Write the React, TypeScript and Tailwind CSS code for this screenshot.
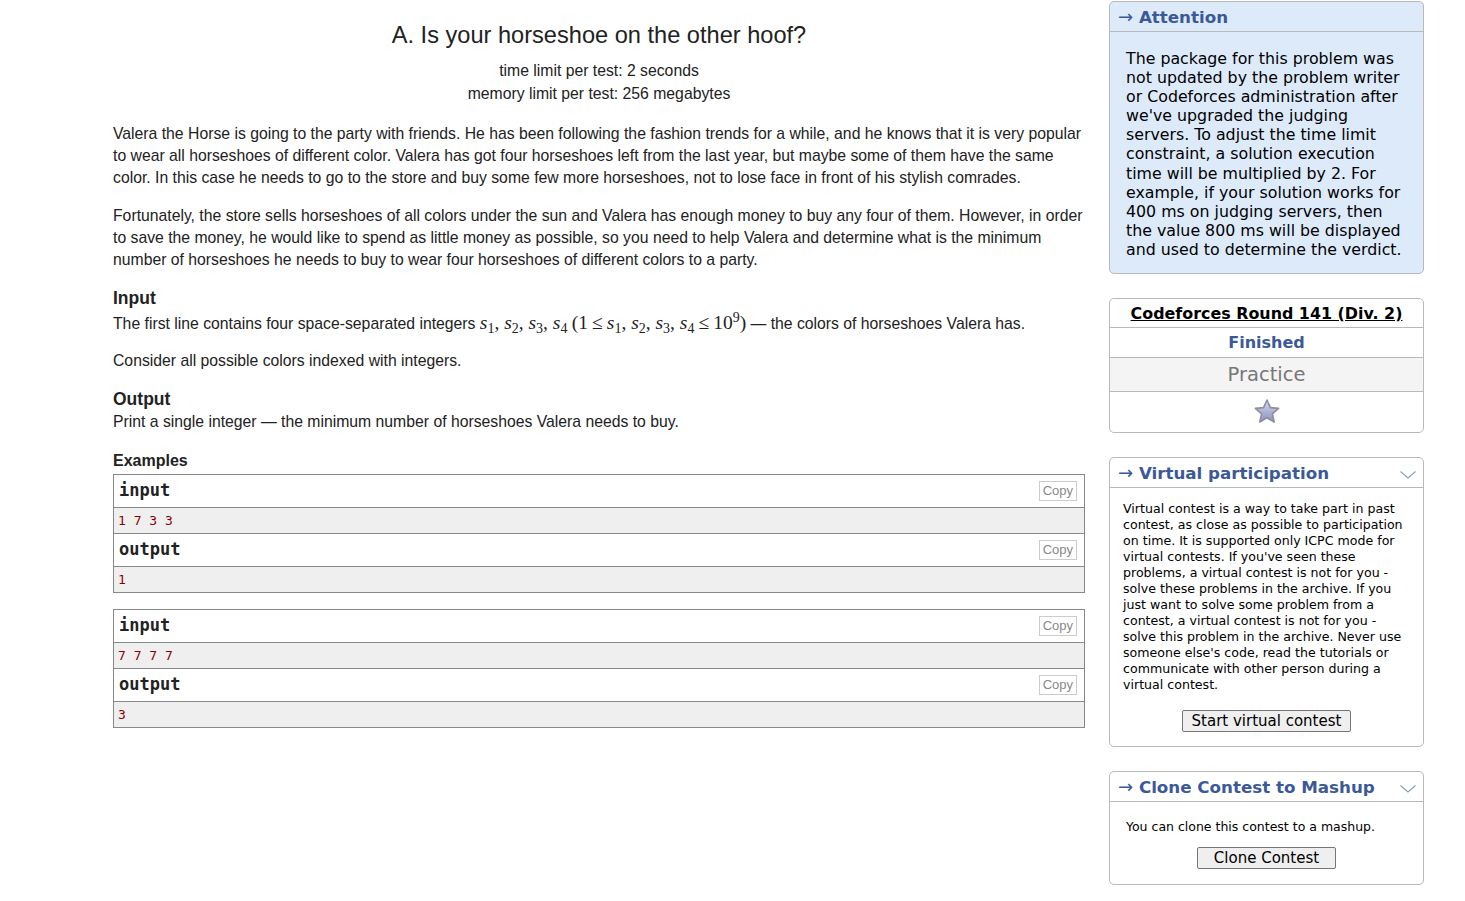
import React from 'react';

const sans = "font-['Liberation_Sans',Arial,sans-serif]";
const verdana = "font-['DejaVu_Sans',Verdana,sans-serif]";
const mono = "font-['DejaVu_Sans_Mono',Consolas,monospace]";
const serif = "font-['Liberation_Serif','Times_New_Roman',serif]";

const examples = [
  { input: '1 7 3 3', output: '1' },
  { input: '7 7 7 7', output: '3' },
];

function CopyButton() {
  return (
    <span className={`mr-[7px] border border-[#ccc] px-[3px] text-[13px] leading-[18px] text-[#888] ${sans}`}>
      Copy
    </span>
  );
}

function SampleBox({ input, output }: { input: string; output: string }) {
  const rows = [
    { label: 'input', value: input },
    { label: 'output', value: output },
  ];
  return (
    <div className="border border-[#888]">
      {rows.map((r, i) => (
        <div key={r.label} className={i > 0 ? 'border-t border-[#888]' : ''}>
          <div className="flex h-[33px] items-center justify-between bg-white border-b border-[#888]">
            <span className={`pl-[5px] text-[17px] font-bold text-[#222] ${mono}`}>{r.label}</span>
            <CopyButton />
          </div>
          <div className={`h-[25px] bg-[#efefef] pl-[4px] text-[13px] leading-[25px] text-[#8b0000] ${mono}`}>{r.value}</div>
        </div>
      ))}
    </div>
  );
}

function Chevron() {
  return (
    <svg width="18" height="10" viewBox="0 0 18 10" className="mr-[6px] mt-[4px]">
      <polyline points="1.5,1.5 9,8 16.5,1.5" fill="none" stroke="#8aa0c0" strokeWidth="1.2" />
    </svg>
  );
}

function Star() {
  return (
    <svg width="30" height="30" viewBox="0 0 30 30">
      <defs>
        <linearGradient id="starFill" x1="0" y1="0" x2="0" y2="1">
          <stop offset="0" stopColor="#d6d8ee" />
          <stop offset="1" stopColor="#8a90c6" />
        </linearGradient>
      </defs>
      <path
        d="M15 3 L18.4 10.6 L26.6 11.4 L20.4 16.9 L22.2 25 L15 20.8 L7.8 25 L9.6 16.9 L3.4 11.4 L11.6 10.6 Z"
        fill="url(#starFill)"
        stroke="#8e8e9c"
        strokeWidth="1.6"
        strokeLinejoin="round"
      />
    </svg>
  );
}

function SideHeader({ title, chevron }: { title: string; chevron?: boolean }) {
  return (
    <div className="flex h-[30px] items-center justify-between border-b border-[#b9b9b9] pl-[8px]">
      <span className={`text-[16.7px] font-bold text-[#3b5998] ${verdana}`}>
        <span className="text-[18px] font-normal">→</span> {title}
      </span>
      {chevron && <Chevron />}
    </div>
  );
}

function Sidebar() {
  return (
    <div className={`mt-[1px] flex w-[315px] shrink-0 flex-col ${verdana}`}>
      <div className="rounded-[5px] border border-[#b9b9b9] bg-[#ddeafa]">
        <SideHeader title="Attention" />
        <div className="px-[16px] pt-[17px] pb-[14px] text-[15.8px] leading-[19.1px] text-black">
          The package for this problem was<br />
          not updated by the problem writer<br />
          or Codeforces administration after<br />
          we've upgraded the judging<br />
          servers. To adjust the time limit<br />
          constraint, a solution execution<br />
          time will be multiplied by 2. For<br />
          example, if your solution works for<br />
          400 ms on judging servers, then<br />
          the value 800 ms will be displayed<br />
          and used to determine the verdict.
        </div>
      </div>

      <div className="mt-[24px] rounded-[5px] border border-[#b9b9b9] text-center">
        <div className="h-[29px] border-b border-[#b9b9b9] text-[15.9px] font-bold leading-[29px] text-black underline">
          Codeforces Round 141 (Div. 2)
        </div>
        <div className="h-[30px] border-b border-[#b9b9b9] text-[16px] font-bold leading-[30px] text-[#3b5998]">
          Finished
        </div>
        <div className="h-[34px] border-b border-[#b9b9b9] bg-[#f4f4f4] text-[19.5px] leading-[34px] text-[#777]">
          Practice
        </div>
        <div className="flex h-[40px] items-center justify-center">
          <Star />
        </div>
      </div>

      <div className="mt-[24px] rounded-[5px] border border-[#b9b9b9]">
        <SideHeader title="Virtual participation" chevron />
        <div className="px-[13px] pt-[13px] pb-[14px] text-[12.6px] leading-[16px] text-black">
          Virtual contest is a way to take part in past<br />
          contest, as close as possible to participation<br />
          on time. It is supported only ICPC mode for<br />
          virtual contests. If you've seen these<br />
          problems, a virtual contest is not for you -<br />
          solve these problems in the archive. If you<br />
          just want to solve some problem from a<br />
          contest, a virtual contest is not for you -<br />
          solve this problem in the archive. Never use<br />
          someone else's code, read the tutorials or<br />
          communicate with other person during a<br />
          virtual contest.
          <div className="mt-[17px] flex justify-center">
            <button className="h-[22px] rounded-[2px] border border-[#767676] bg-[#efefef] px-[9px] text-[15px] leading-[20px] text-black">
              Start virtual contest
            </button>
          </div>
        </div>
      </div>

      <div className="mt-[24px] rounded-[5px] border border-[#b9b9b9]">
        <SideHeader title="Clone Contest to Mashup" chevron />
        <div className="px-[16px] pt-[16px] pb-[15px] text-[12.5px] leading-[18px] text-black">
          You can clone this contest to a mashup.
          <div className="mt-[11px] flex justify-center">
            <button className="h-[22px] rounded-[2px] border border-[#767676] bg-[#efefef] px-[16px] text-[15px] leading-[20px] text-black">
              Clone Contest
            </button>
          </div>
        </div>
      </div>
    </div>
  );
}

function S({ n }: { n: number }) {
  return (
    <>
      <i>s</i>
      <sub className="text-[14px]">{n}</sub>
    </>
  );
}

function MathVars() {
  return (
    <span className={`${serif} text-[19.5px]`}>
      <S n={1} />, <S n={2} />, <S n={3} />, <S n={4} />
    </span>
  );
}

function Statement() {
  return (
    <div className={`w-[972px] shrink-0 text-[15.75px] text-[#222] ${sans}`}>
      <div className="pt-[20px] text-center text-[23.6px] leading-[30px]">A. Is your horseshoe on the other hoof?</div>
      <div className="mt-[9px] text-center leading-[23px]">
        <div>time limit per test: 2 seconds</div>
        <div>memory limit per test: 256 megabytes</div>
      </div>

      <p className="mt-[18px] leading-[22px]">
        Valera the Horse is going to the party with friends. He has been following the fashion trends for a while, and he
        knows that it is very popular to wear all horseshoes of different color. Valera has got four horseshoes left from the
        last year, but maybe some of them have the same color. In this case he needs to go to the store and buy some few
        more horseshoes, not to lose face in front of his stylish comrades.
      </p>
      <p className="mt-[16px] leading-[22px]">
        Fortunately, the store sells horseshoes of all colors under the sun and Valera has enough money to buy any four of
        them. However, in order to save the money, he would like to spend as little money as possible, so you need to help
        Valera and determine what is the minimum number of horseshoes he needs to buy to wear four horseshoes of different
        colors to a party.
      </p>

      <div className="mt-[16px] text-[17.5px] font-bold leading-[23px]">Input</div>
      <p className="mt-[1px] leading-[24px]">
        The first line contains four space-separated integers <MathVars />{' '}
        <span className={`${serif} text-[19.5px]`}>
          (1<span className="mx-[4px]">≤</span>
          <MathVars />
          <span className="mx-[4px]">≤</span>10<sup className="text-[14px]">9</sup>)
        </span>{' '}
        — the colors of horseshoes Valera has.
      </p>
      <p className="mt-[14px] leading-[22px]">Consider all possible colors indexed with integers.</p>

      <div className="mt-[16px] text-[17.5px] font-bold leading-[23px]">Output</div>
      <p className="leading-[22px]">Print a single integer — the minimum number of horseshoes Valera needs to buy.</p>

      <div className="mt-[17px] text-[16px] font-bold leading-[22px]">Examples</div>
      <div className="mt-[2px] flex flex-col gap-[16px]">
        {examples.map((ex, i) => (
          <SampleBox key={i} input={ex.input} output={ex.output} />
        ))}
      </div>
    </div>
  );
}

export default function App() {
  return (
    <div className="flex min-h-[901px] gap-[24px] bg-white pl-[113px]">
      <Statement />
      <Sidebar />
    </div>
  );
}
